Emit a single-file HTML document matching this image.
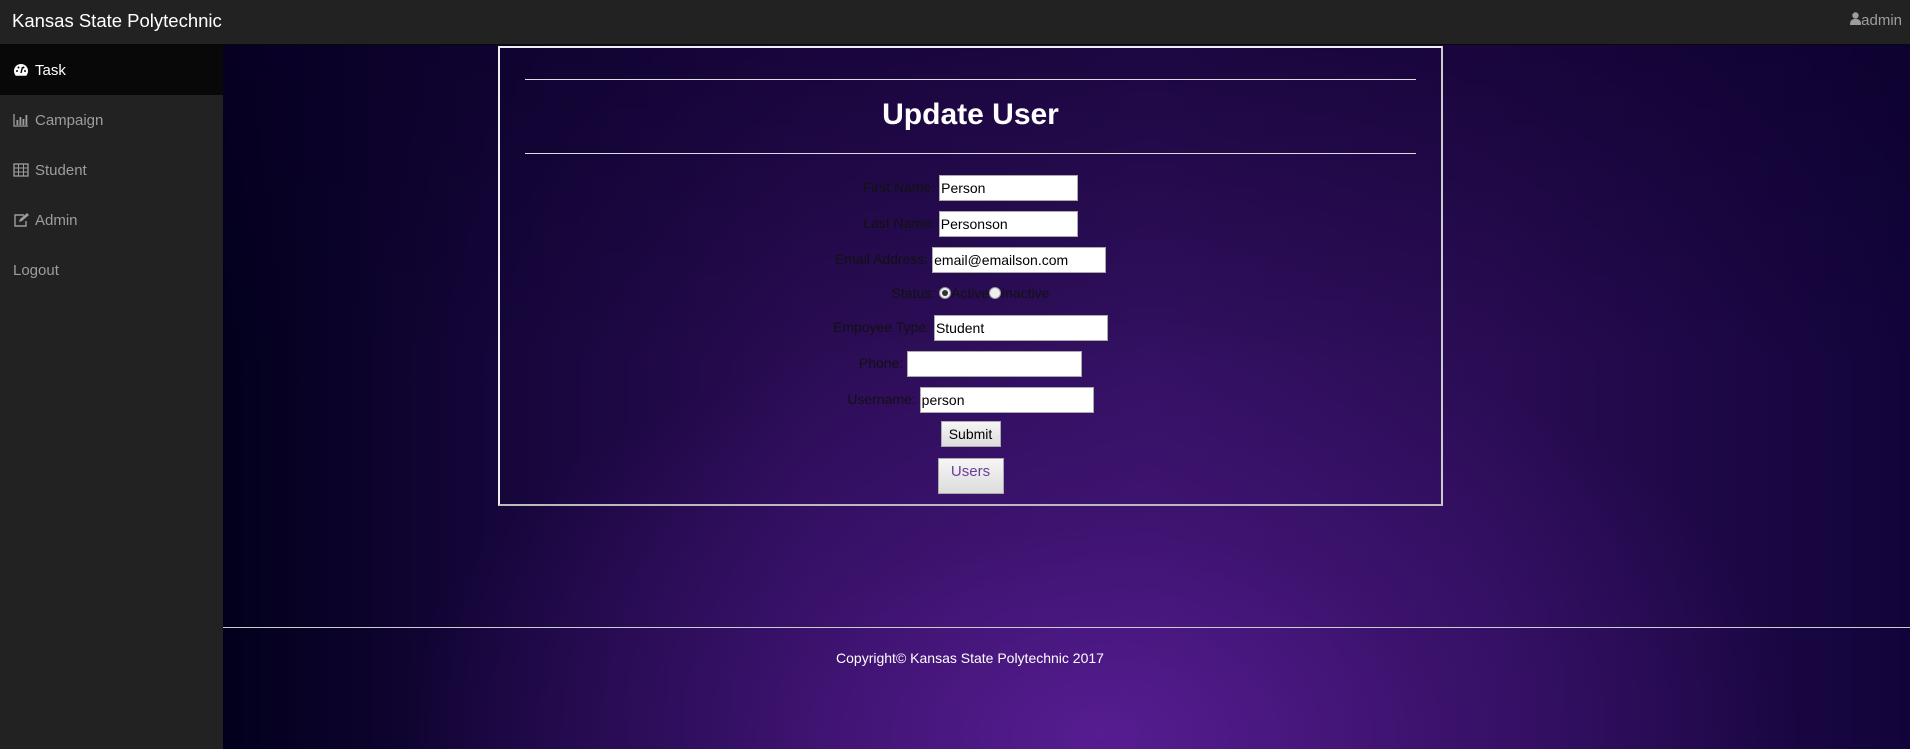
<!DOCTYPE html>
<html><head><meta charset="utf-8"><style>
*{box-sizing:border-box;margin:0;padding:0}
body{width:1910px;height:749px;overflow:hidden;font-family:"Liberation Sans",Arial,sans-serif;background:#222;position:relative}
.nav{position:absolute;left:0;top:0;width:1910px;height:45px;background:#222;border-bottom:1px solid #080808}
.brand{position:absolute;left:12px;top:10px;color:#fff;font-size:18.5px}
.user{position:absolute;right:8px;top:12px;color:#9d9d9d;font-size:15px}
.side{position:absolute;left:0;top:45px;width:223px;height:704px;background:#222}
.side div{height:50px;line-height:52px;padding-left:13px;color:#9d9d9d;font-size:15px}
.side div.act{background:#080808;color:#fff}
.side svg{vertical-align:-2px;margin-right:6px}
.main{position:absolute;left:223px;top:45px;width:1687px;height:704px;background:
radial-gradient(ellipse 700px 420px at 52% 98%,rgba(90,30,150,.9) 0%,rgba(80,25,140,.4) 50%,rgba(0,0,0,0) 100%),
linear-gradient(90deg,#02001c 0%,#140538 15%,#2a0c54 35%,#321060 55%,#2a0c54 75%,#12043a 100%)}
.main:before{content:"";position:absolute;left:0;top:0;width:100%;height:100%;background:linear-gradient(180deg,rgba(10,0,40,.55) 0%,rgba(0,0,0,0) 45%)}
.box{position:absolute;left:275px;top:1px;width:945px;height:460px;border:2px solid #eee;border-bottom-color:#bbb;border-right-color:#ccc}
.hr{position:absolute;left:25px;width:891px;height:1px;background:#ddd}
h1{position:absolute;left:0;width:941px;top:50px;text-align:center;color:#fff;font-size:30px;font-weight:bold}
.row{position:absolute;left:0;width:941px;text-align:center;font-size:14px;color:#111;height:26px;line-height:26px}
input[type=text]{height:26px;border:1px solid #aaa;font:14px "Liberation Sans",Arial,sans-serif;padding:0 1px;vertical-align:middle;color:#000;background:#fff}
.rad{display:inline-block;width:12px;height:12px;border-radius:50%;background:#eee;border:1px solid #999;vertical-align:-1px;position:relative}
.rad.on:after{content:"";position:absolute;left:2px;top:2px;width:6px;height:6px;border-radius:50%;background:#333}
.btn{display:inline-block;background:linear-gradient(#f6f6f6,#dcdcdc);border:1px solid #aaa;color:#000;font-size:14px}
.foot{position:absolute;left:0;top:582px;width:1687px;height:1px;background:#ccc}
.copy{position:absolute;left:0;width:1494px;top:605px;text-align:center;color:#fff;font-size:14px}
</style></head><body>
<div class="nav"><div class="brand">Kansas State Polytechnic</div>
<div class="user"><svg width="11" height="13" viewBox="0 0 11 13"><circle cx="5.5" cy="3.5" r="3.2" fill="#9d9d9d"/><path d="M0 13 C0 8 2 7 5.5 7 C9 7 11 8 11 13Z" fill="#9d9d9d"/></svg>admin</div></div>
<div class="side">
<div class="act"><svg width="16" height="14" viewBox="0 0 16 14"><path d="M8 1A7 7 0 0 0 1 8c0 2 .8 3.6 1.8 4.8h10.4C14.2 11.6 15 10 15 8A7 7 0 0 0 8 1z" fill="#fff"/><circle cx="4" cy="8" r="1" fill="#080808"/><circle cx="5.5" cy="4.5" r="1" fill="#080808"/><circle cx="10.5" cy="4.5" r="1" fill="#080808"/><circle cx="12" cy="8" r="1" fill="#080808"/><path d="M8 10 L9.5 4" stroke="#080808" stroke-width="1.5"/></svg>Task</div>
<div><svg width="16" height="14" viewBox="0 0 16 14"><path d="M1 1v12h14" stroke="#9d9d9d" fill="none" stroke-width="1.3"/><rect x="3.5" y="7" width="1.8" height="5" fill="#9d9d9d"/><rect x="6.5" y="4" width="1.8" height="8" fill="#9d9d9d"/><rect x="9.5" y="6" width="1.8" height="6" fill="#9d9d9d"/><rect x="12.5" y="2" width="1.8" height="10" fill="#9d9d9d"/></svg>Campaign</div>
<div><svg width="16" height="14" viewBox="0 0 16 14"><rect x="1" y="1" width="14" height="12" fill="none" stroke="#9d9d9d" stroke-width="1.3"/><path d="M1 5h14M1 9h14M5.5 1v12M10.5 1v12" stroke="#9d9d9d"/></svg>Student</div>
<div><svg width="16" height="14" viewBox="0 0 16 14"><path d="M11 2H2v11h11V8" stroke="#9d9d9d" fill="none" stroke-width="1.4"/><path d="M6 9l1-3 7-6 2 2-7 6z" fill="#9d9d9d"/></svg>Admin</div>
<div>Logout</div>
</div>
<div class="main">
<div class="box">
<div class="hr" style="top:31px"></div>
<h1>Update User</h1>
<div class="hr" style="top:105px"></div>
<div class="row" style="top:126px">First Name: <input type="text" value="Person" style="width:139px"></div>
<div class="row" style="top:162px">Last Name: <input type="text" value="Personson" style="width:139px"></div>
<div class="row" style="top:198px">Email Address: <input type="text" value="email@emailson.com" style="width:174px"></div>
<div class="row" style="top:232px">Status: <span class="rad on"></span>Active<span class="rad"></span>Inactive</div>
<div class="row" style="top:266px">Empoyee Type: <input type="text" value="Student" style="width:174px"></div>
<div class="row" style="top:302px">Phone: <input type="text" value="" style="width:175px"></div>
<div class="row" style="top:338px">Username: <input type="text" value="person" style="width:174px"></div>
<div class="row" style="top:373px"><span class="btn" style="width:60px;height:26px;line-height:24px">Submit</span></div>
<div class="row" style="top:410px;height:36px"><span class="btn" style="width:66px;height:36px;line-height:26px;color:#6b3d9a;font-size:15px;vertical-align:top">Users</span></div>
</div>
<div class="foot"></div>
<div class="copy">Copyright© Kansas State Polytechnic 2017</div>
</div>
</body></html>
